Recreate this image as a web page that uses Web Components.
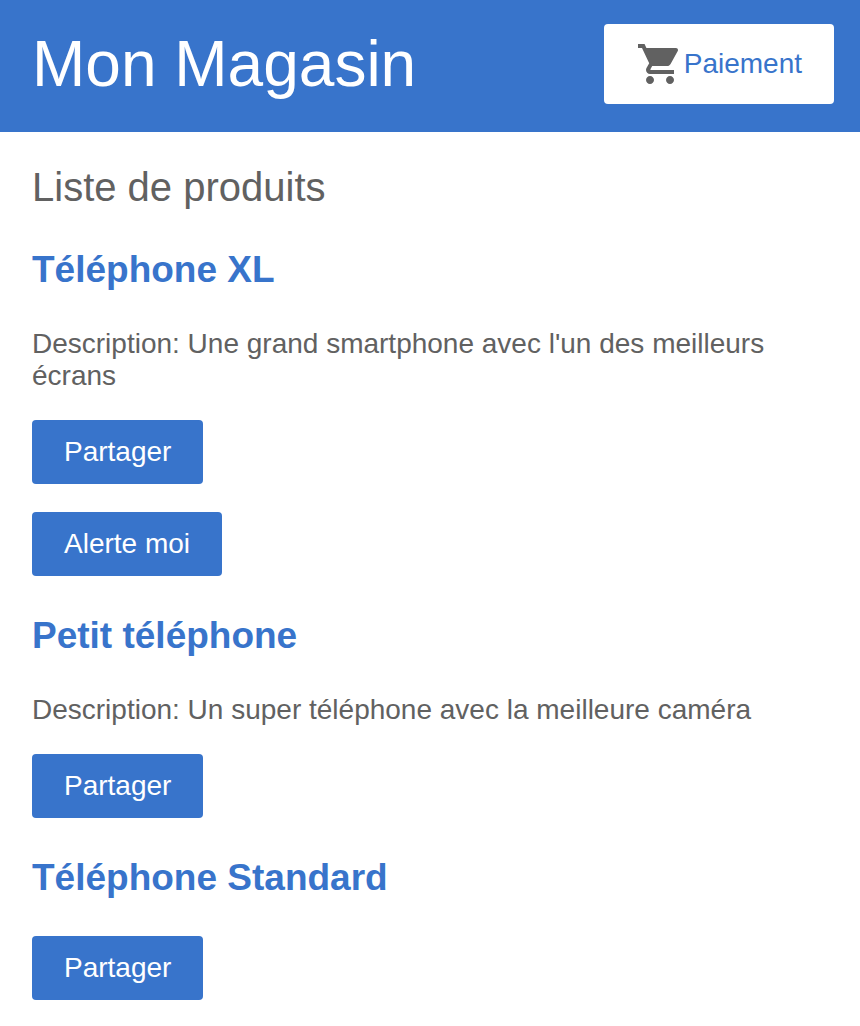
<!DOCTYPE html>
<html lang="fr">
<head>
<meta charset="utf-8">
<title>Mon Magasin</title>
<style>
body { margin: 0; background: #fff; color: #616161; font: 28px/32px "Liberation Sans", Arial, sans-serif; }
</style>
</head>
<body>
<shop-app></shop-app>
<script>
const define = (name, html) => {
  const template = document.createElement('template');
  template.innerHTML = html;
  customElements.define(name, class extends HTMLElement {
    constructor() {
      super();
      this.attachShadow({ mode: 'open' }).append(template.content.cloneNode(true));
    }
  });
};

define('cart-icon', `
<style>
:host { display: block; width: 48px; height: 48px; color: #616161; }
svg { display: block; width: 100%; height: 100%; fill: currentColor; }
</style>
<svg viewBox="0 0 24 24" aria-hidden="true"><path d="M7 18c-1.1 0-1.99.9-1.99 2S5.9 22 7 22s2-.9 2-2-.9-2-2-2zM1 2v2h2l3.6 7.59-1.35 2.45c-.16.28-.25.61-.25.96 0 1.1.9 2 2 2h12v-2H7.42c-.14 0-.25-.11-.25-.25l.03-.12.9-1.63h7.45c.75 0 1.41-.41 1.75-1.03l3.58-6.49c.08-.14.12-.31.12-.48 0-.55-.45-1-1-1H5.21l-.94-2H1zm16 16c-1.1 0-1.99.9-1.99 2s.89 2 1.99 2 2-.9 2-2-.9-2-2-2z"/></svg>`);

define('top-bar', `
<style>
:host { display: flex; align-items: center; justify-content: space-between; box-sizing: border-box; padding: 24px 26px 28px 32px; background: #3874cb; color: #fff; }
h1 { margin: 0; font-size: 64px; line-height: 80px; font-weight: 400; }
a { display: flex; align-items: center; box-sizing: border-box; height: 80px; padding: 0 32px; border-radius: 4px; background: #fff; color: #3874cb; text-decoration: none; }
</style>
<h1><slot></slot></h1>
<a href="#paiement"><cart-icon></cart-icon>Paiement</a>`);

define('action-button', `
<style>
:host { display: block; }
button { display: block; border: 0; border-radius: 4px; padding: 16px 32px; background: #3874cb; color: #fff; font: inherit; cursor: pointer; }
</style>
<button type="button"><slot></slot></button>`);

define('product-item', `
<style>
:host { display: flex; flex-direction: column; gap: 28px; }
h3 { margin: 0 0 8px; font-size: 37px; line-height: 44px; font-weight: 700; }
a { color: #3874cb; text-decoration: none; }
::slotted(p) { margin: 0; }
</style>
<h3><a href="#produit"><slot name="name"></slot></a></h3>
<slot></slot>`);

define('shop-app', `
<style>
:host { display: block; }
main { display: flex; flex-direction: column; gap: 38px; padding: 32px; }
h2 { margin: 0; font-size: 40px; line-height: 46px; font-weight: 400; }
p { margin: 0; }
</style>
<top-bar>Mon Magasin</top-bar>
<main>
  <h2>Liste de produits</h2>
  <product-item>
    <span slot="name">Téléphone XL</span>
    <p>Description: Une grand smartphone avec l'un des meilleurs écrans</p>
    <action-button>Partager</action-button>
    <action-button>Alerte moi</action-button>
  </product-item>
  <product-item>
    <span slot="name">Petit téléphone</span>
    <p>Description: Un super téléphone avec la meilleure caméra</p>
    <action-button>Partager</action-button>
  </product-item>
  <product-item>
    <span slot="name">Téléphone Standard</span>
    <action-button>Partager</action-button>
  </product-item>
</main>`);
</script>
</body>
</html>
